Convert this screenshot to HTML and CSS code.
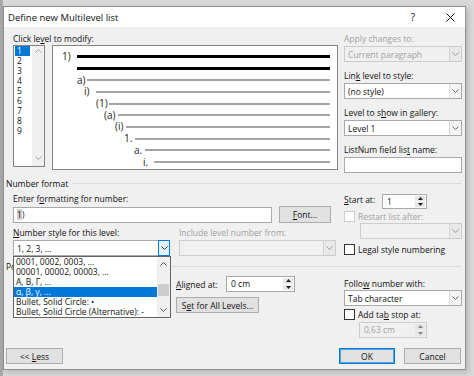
FILE: index.html
```html
<!DOCTYPE html>
<html lang="en">
<head>
  <meta charset="UTF-8">
  <meta name="viewport" content="width=device-width, initial-scale=1.0">
  <title>Define new Multilevel list</title>
  <link rel="stylesheet" href="styles.css">
</head>
<body>
  <div class="dialog">
    <div class="titlebar">
      <span class="title">Define new Multilevel list</span>
      <span class="help">?</span>
      <span class="close">
        <svg width="9" height="9" viewBox="0 0 9 9"><path d="M0.5 0.5L8.5 8.5M8.5 0.5L0.5 8.5" stroke="#111" stroke-width="1"/></svg>
      </span>
    </div>

    <div class="content">
      <!-- level list, preview and the right-hand fields -->
      <div class="top">
        <div class="top-left">
          <div class="label">Click le<u>v</u>el to modify:</div>
          <div class="levels-row">
            <div class="levels">
              <div class="level-items">
                <div class="level sel">1</div>
                <div class="level">2</div>
                <div class="level">3</div>
                <div class="level">4</div>
                <div class="level">5</div>
                <div class="level">6</div>
                <div class="level">7</div>
                <div class="level">8</div>
                <div class="level">9</div>
              </div>
              <div class="vscroll dim">
                <svg width="7" height="4" viewBox="0 0 7 4"><path d="M0.5 3.5L3.5 0.5L6.5 3.5" fill="none" stroke="currentColor"/></svg>
                <svg width="7" height="4" viewBox="0 0 7 4"><path d="M0.5 0.5L3.5 3.5L6.5 0.5" fill="none" stroke="currentColor"/></svg>
              </div>
            </div>
            <div class="preview">
              <div class="pv-row first" style="--at:9px;--line:24px"><span class="pv-num">1)</span><span class="pv-line"></span></div>
              <div class="pv-row first" style="--at:24px;--line:24px"><span class="pv-num"></span><span class="pv-line"></span></div>
              <div class="pv-row" style="--at:24px;--line:34px"><span class="pv-num">a)</span><span class="pv-line"></span></div>
              <div class="pv-row" style="--at:31px;--line:43px"><span class="pv-num">i)</span><span class="pv-line"></span></div>
              <div class="pv-row" style="--at:43px;--line:56px"><span class="pv-num">(1)</span><span class="pv-line"></span></div>
              <div class="pv-row" style="--at:51px;--line:65px"><span class="pv-num">(a)</span><span class="pv-line"></span></div>
              <div class="pv-row" style="--at:62px;--line:73px"><span class="pv-num">(i)</span><span class="pv-line"></span></div>
              <div class="pv-row" style="--at:71px;--line:82px"><span class="pv-num">1.</span><span class="pv-line"></span></div>
              <div class="pv-row" style="--at:81px;--line:92px"><span class="pv-num">a.</span><span class="pv-line"></span></div>
              <div class="pv-row" style="--at:90px;--line:101px"><span class="pv-num">i.</span><span class="pv-line"></span></div>
            </div>
          </div>
        </div>

        <div class="side">
          <div class="label off">Apply changes to:</div>
          <div class="select off">
            <span class="val">Current paragraph</span>
            <span class="arrow"><svg width="7" height="4" viewBox="0 0 7 4"><path d="M0.5 0.5L3.5 3.5L6.5 0.5" fill="none" stroke="currentColor"/></svg></span>
          </div>
          <div class="label gap">Lin<u>k</u> level to style:</div>
          <div class="select">
            <span class="val">(no style)</span>
            <span class="arrow"><svg width="7" height="4" viewBox="0 0 7 4"><path d="M0.5 0.5L3.5 3.5L6.5 0.5" fill="none" stroke="currentColor"/></svg></span>
          </div>
          <div class="label gap">Level to s<u>h</u>ow in gallery:</div>
          <div class="select">
            <span class="val">Level 1</span>
            <span class="arrow"><svg width="7" height="4" viewBox="0 0 7 4"><path d="M0.5 0.5L3.5 3.5L6.5 0.5" fill="none" stroke="currentColor"/></svg></span>
          </div>
          <div class="label gap">ListNum field lis<u>t</u> name:</div>
          <div class="textbox"></div>
        </div>
      </div>

      <div class="group"><span>Number format</span></div>

      <div class="section">
        <div class="main">
          <div class="label first">Enter f<u>o</u>rmatting for number:</div>
          <div class="fmt-row">
            <div class="textbox fmt"><span class="field">1</span>)</div>
            <div class="btn font-btn"><span><u>F</u>ont...</span></div>
          </div>
          <div class="cols">
            <div class="col">
              <div class="label"><u>N</u>umber style for this level:</div>
              <div class="select-wrap">
                <div class="select open">
                  <span class="val">1, 2, 3, ...</span>
                  <span class="arrow"><svg width="7" height="4" viewBox="0 0 7 4"><path d="M0.5 0.5L3.5 3.5L6.5 0.5" fill="none" stroke="currentColor"/></svg></span>
                </div>
                <div class="dropdown">
                  <div class="dd-items">
                    <div class="dd-item">0001, 0002, 0003, ...</div>
                    <div class="dd-item">00001, 00002, 00003, ...</div>
                    <div class="dd-item">Α, Β, Γ, ...</div>
                    <div class="dd-item sel">α, β, γ, ...</div>
                    <div class="dd-item">Bullet, Solid Circle: •</div>
                    <div class="dd-item">Bullet, Solid Circle (Alternative): -</div>
                  </div>
                  <div class="dd-scroll">
                    <span class="dd-btn"><svg width="7" height="4" viewBox="0 0 7 4"><path d="M0.5 3.5L3.5 0.5L6.5 3.5" fill="none" stroke="currentColor"/></svg></span>
                    <span class="dd-track"><span class="dd-thumb"></span></span>
                    <span class="dd-btn"><svg width="7" height="4" viewBox="0 0 7 4"><path d="M0.5 0.5L3.5 3.5L6.5 0.5" fill="none" stroke="currentColor"/></svg></span>
                  </div>
                </div>
              </div>
            </div>
            <div class="col">
              <div class="label off">Include level number from:</div>
              <div class="select off">
                <span class="val"></span>
                <span class="arrow"><svg width="7" height="4" viewBox="0 0 7 4"><path d="M0.5 0.5L3.5 3.5L6.5 0.5" fill="none" stroke="currentColor"/></svg></span>
              </div>
            </div>
          </div>
        </div>

        <div class="side">
          <div class="start-row">
            <span class="label start-label"><u>S</u>tart at:</span>
            <div class="spin start-spin">
              <span class="val">1</span>
              <span class="spin-btns">
                <span><svg width="5" height="3" viewBox="0 0 5 3"><path d="M0 3L2.5 0L5 3Z" fill="currentColor"/></svg></span>
                <span><svg width="5" height="3" viewBox="0 0 5 3"><path d="M0 0L2.5 3L5 0Z" fill="currentColor"/></svg></span>
              </span>
            </div>
          </div>
          <div class="check-row restart off">
            <span class="check"></span><span>Restart list after:</span>
          </div>
          <div class="select off restart-select">
            <span class="val"></span>
            <span class="arrow"><svg width="7" height="4" viewBox="0 0 7 4"><path d="M0.5 0.5L3.5 3.5L6.5 0.5" fill="none" stroke="currentColor"/></svg></span>
          </div>
          <div class="check-row legal">
            <span class="check"></span><span>Le<u>g</u>al style numbering</span>
          </div>
        </div>
      </div>

      <!-- the open dropdown above covers most of this heading -->
      <div class="group"><span>Position</span></div>

      <div class="section">
        <div class="main pos-main">
          <div class="aligned-row">
            <span class="label aligned-label"><u>A</u>ligned at:</span>
            <div class="spin aligned-spin">
              <span class="val">0 cm</span>
              <span class="spin-btns">
                <span><svg width="5" height="3" viewBox="0 0 5 3"><path d="M0 3L2.5 0L5 3Z" fill="currentColor"/></svg></span>
                <span><svg width="5" height="3" viewBox="0 0 5 3"><path d="M0 0L2.5 3L5 0Z" fill="currentColor"/></svg></span>
              </span>
            </div>
          </div>
          <div class="btn all-btn"><span>S<u>e</u>t for All Levels...</span></div>
        </div>

        <div class="side">
          <div class="label follow-label">Follo<u>w</u> number with:</div>
          <div class="select">
            <span class="val">Tab character</span>
            <span class="arrow"><svg width="7" height="4" viewBox="0 0 7 4"><path d="M0.5 0.5L3.5 3.5L6.5 0.5" fill="none" stroke="currentColor"/></svg></span>
          </div>
          <div class="check-row tab-check">
            <span class="check"></span><span>Add ta<u>b</u> stop at:</span>
          </div>
          <div class="spin off tab-spin">
            <span class="val">0,63 cm</span>
            <span class="spin-btns">
              <span><svg width="5" height="3" viewBox="0 0 5 3"><path d="M0 3L2.5 0L5 3Z" fill="currentColor"/></svg></span>
              <span><svg width="5" height="3" viewBox="0 0 5 3"><path d="M0 0L2.5 3L5 0Z" fill="currentColor"/></svg></span>
            </span>
          </div>
        </div>
      </div>

      <div class="footer">
        <div class="btn less-btn"><span>&lt;&lt; <u>L</u>ess</span></div>
        <div class="btn ok-btn"><span>OK</span></div>
        <div class="btn cancel-btn"><span>Cancel</span></div>
      </div>
    </div>
  </div>
</body>
</html>
```

FILE: styles.css
```css
body {
  margin: 0;
  height: 376px;
  overflow: hidden;
  background: linear-gradient(90deg, #a9a9a9 0, #a9a9a9 3px, #d9d9d9 3px);
  font-family: "Open Sans", "Noto Sans", sans-serif;
  font-size: 8.5px;
  color: #111;
}
u { text-decoration-thickness: 1px; text-underline-offset: 1px; }

.dialog {
  margin: 6px 0 0 3px;
  width: 463px;
  height: 364px;
  box-sizing: border-box;
  border: 1px solid #8f8f8f;
  background: #f0f0f0;
  box-shadow: 2px 2px 6px rgba(0,0,0,0.18);
}
.titlebar {
  height: 20px;
  background: #fff;
  display: flex;
  align-items: center;
  padding-left: 4px;
  font-size: 9.5px;
}
.title { flex: 1; }
.help { margin-right: 31px; font-size: 10px; }
.close { display: flex; margin-right: 10px; }

.content { padding: 0 3px 0 2px; }

.label {
  line-height: 11px;
  height: 11px;
  white-space: nowrap;
}
.off { color: #a2a2a2; }

/* top area */
.top {
  display: flex;
  padding-left: 7px;
  margin-top: 6px;
}
.top-left { width: 325px; }
.levels-row { display: flex; margin-top: 1px; }
.levels {
  width: 32px;
  height: 122px;
  box-sizing: border-box;
  border: 1px solid #838383;
  background: #fff;
  display: flex;
}
.level-items { flex: 1; }
.level {
  height: 10px;
  line-height: 10px;
  margin: 0 2px 0 1px;
  padding-left: 2px;
}
.level.sel { background: #0078d7; color: #fff; }
.vscroll {
  width: 12px;
  background: #f0f0f0;
  display: flex;
  flex-direction: column;
  align-items: center;
  justify-content: space-between;
  padding: 3px 0 6px;
  box-sizing: border-box;
}
.dim { color: #a8a8a8; }

.preview {
  margin-left: 7px;
  flex: 1;
  height: 125px;
  box-sizing: border-box;
  border: 1px solid #838383;
  background: #fff;
  padding: 5px 7px 0 0;
}
.pv-row {
  display: flex;
  align-items: center;
  height: 11.7px;
  padding-left: var(--at);
}
.pv-num {
  flex: none;
  width: calc(var(--line) - var(--at));
  font-size: 10px;
  line-height: 11px;
  color: #222;
  white-space: nowrap;
}
.pv-line { flex: 1; height: 2px; background: #a4a4a4; }
.pv-row.first .pv-line { height: 3px; background: #000; }

.side { width: 118px; margin-left: 6px; flex: none; }
.side .gap { margin-top: 8px; }

/* inputs */
.select {
  height: 16px;
  box-sizing: border-box;
  border: 1px solid #a9a9a9;
  background: #fff;
  display: flex;
  align-items: center;
  margin-top: 2px;
}
.select .val { flex: 1; padding-left: 3px; white-space: nowrap; }
.arrow {
  width: 12px;
  height: 100%;
  box-sizing: border-box;
  border-left: 1px solid #dcdcdc;
  background: #f4f4f4;
  display: flex;
  align-items: center;
  justify-content: center;
  color: #666;
}
.select.off { background: #f0f0f0; border-color: #cccccc; }
.select.off .arrow { background: #e8e8e8; border-left-color: #d4d4d4; color: #9a9a9a; }
.select.open .arrow { border: 1px solid #0078d7; background: #e5f1fb; color: #333; margin-right: -1px; height: 16px; }

.textbox {
  height: 16px;
  box-sizing: border-box;
  border: 1px solid #a9a9a9;
  background: #fff;
  margin-top: 2px;
}

.spin {
  display: flex;
  height: 16px;
  box-sizing: border-box;
  border: 1px solid #a9a9a9;
  background: #fff;
}
.spin .val { flex: 1; padding-left: 4px; line-height: 14px; }
.spin-btns {
  width: 10px;
  display: flex;
  flex-direction: column;
  gap: 1px;
  padding: 1px;
  color: #222;
}
.spin-btns span {
  flex: 1;
  display: flex;
  align-items: center;
  justify-content: center;
  background: #e6e6e6;
}
.spin.off { background: #f0f0f0; border-color: #cccccc; color: #a2a2a2; }
.spin.off .spin-btns { color: #8a8a8a; }

.btn {
  height: 16px;
  box-sizing: border-box;
  border: 1px solid #adadad;
  background: #e1e1e1;
  display: flex;
  align-items: center;
  justify-content: center;
  white-space: nowrap;
}

.check-row {
  display: flex;
  align-items: center;
  height: 11px;
  white-space: nowrap;
}
.check {
  width: 11px;
  height: 11px;
  box-sizing: border-box;
  border: 1px solid #333;
  background: #fff;
  margin-right: 3px;
}
.check-row.off .check { border-color: #cfcfcf; }

/* group headers */
.group {
  display: flex;
  align-items: center;
  line-height: 11px;
  margin-top: 5px;
  white-space: nowrap;
}
.group::after {
  content: "";
  flex: 1;
  height: 1px;
  margin-left: 4px;
  background: #dcdcdc;
}

/* number format */
.section { display: flex; padding-left: 7px; }
.main { width: 323px; flex: none; }
.section .side { margin-left: 8px; }
.label.first { margin-top: 4px; }
.fmt-row { display: flex; align-items: center; margin-top: 2px; }
.fmt { width: 259px; margin-top: 0; padding-left: 3px; line-height: 14px; }
.field { background: #cfcfcf; }
.font-btn { width: 52px; height: 17px; margin-left: 7px; }
.cols { display: flex; gap: 9px; margin-top: 4px; }
.col { width: 157px; }
.select-wrap { position: relative; }

.dropdown {
  position: absolute;
  top: 100%;
  left: 0;
  z-index: 2;
  width: 158px;
  height: 62px;
  box-sizing: border-box;
  border: 1px solid #646464;
  background: #fff;
  display: flex;
}
.dd-items { flex: 1; overflow: hidden; }
.dd-item {
  height: 10px;
  line-height: 10px;
  padding-left: 2px;
  white-space: nowrap;
}
.dd-item.sel { background: #0078d7; color: #fff; }
.dd-scroll {
  width: 13px;
  background: #f0f0f0;
  display: flex;
  flex-direction: column;
  color: #555;
}
.dd-btn { height: 14px; display: flex; align-items: center; justify-content: center; }
.dd-track { flex: 1; }
.dd-thumb { display: block; height: 12px; margin: 13px 1px 0 1px; background: #cdcdcd; }

.start-row { display: flex; margin-top: 5px; }
.start-label { width: 38px; }
.start-spin { width: 45px; height: 15px; }
.restart { margin-top: 2px; }
.restart-select { margin: 5px 0 0 16px; }
.legal { margin-top: 5px; }

/* position */
.pos-main { padding-left: 163px; box-sizing: border-box; }
.aligned-row { display: flex; align-items: center; margin-top: 4px; }
.aligned-label { width: 50px; }
.aligned-spin { width: 69px; }
.all-btn { width: 83px; margin-top: 5px; }
.follow-label { margin-top: 6px; }
.section .side .select { margin-top: 1px; }
.tab-check { margin-top: 3px; }
.tab-spin { width: 68px; margin: 2px 0 0 15px; }

.footer {
  display: flex;
  margin-top: 10px;
  padding-right: 1px;
}
.less-btn { width: 57px; }
.ok-btn {
  width: 56px;
  margin-left: auto;
  border-color: #0078d7;
  box-shadow: inset 0 0 0 1px rgba(0,120,215,0.6);
}
.cancel-btn { width: 57px; margin-left: 9px; }
```
